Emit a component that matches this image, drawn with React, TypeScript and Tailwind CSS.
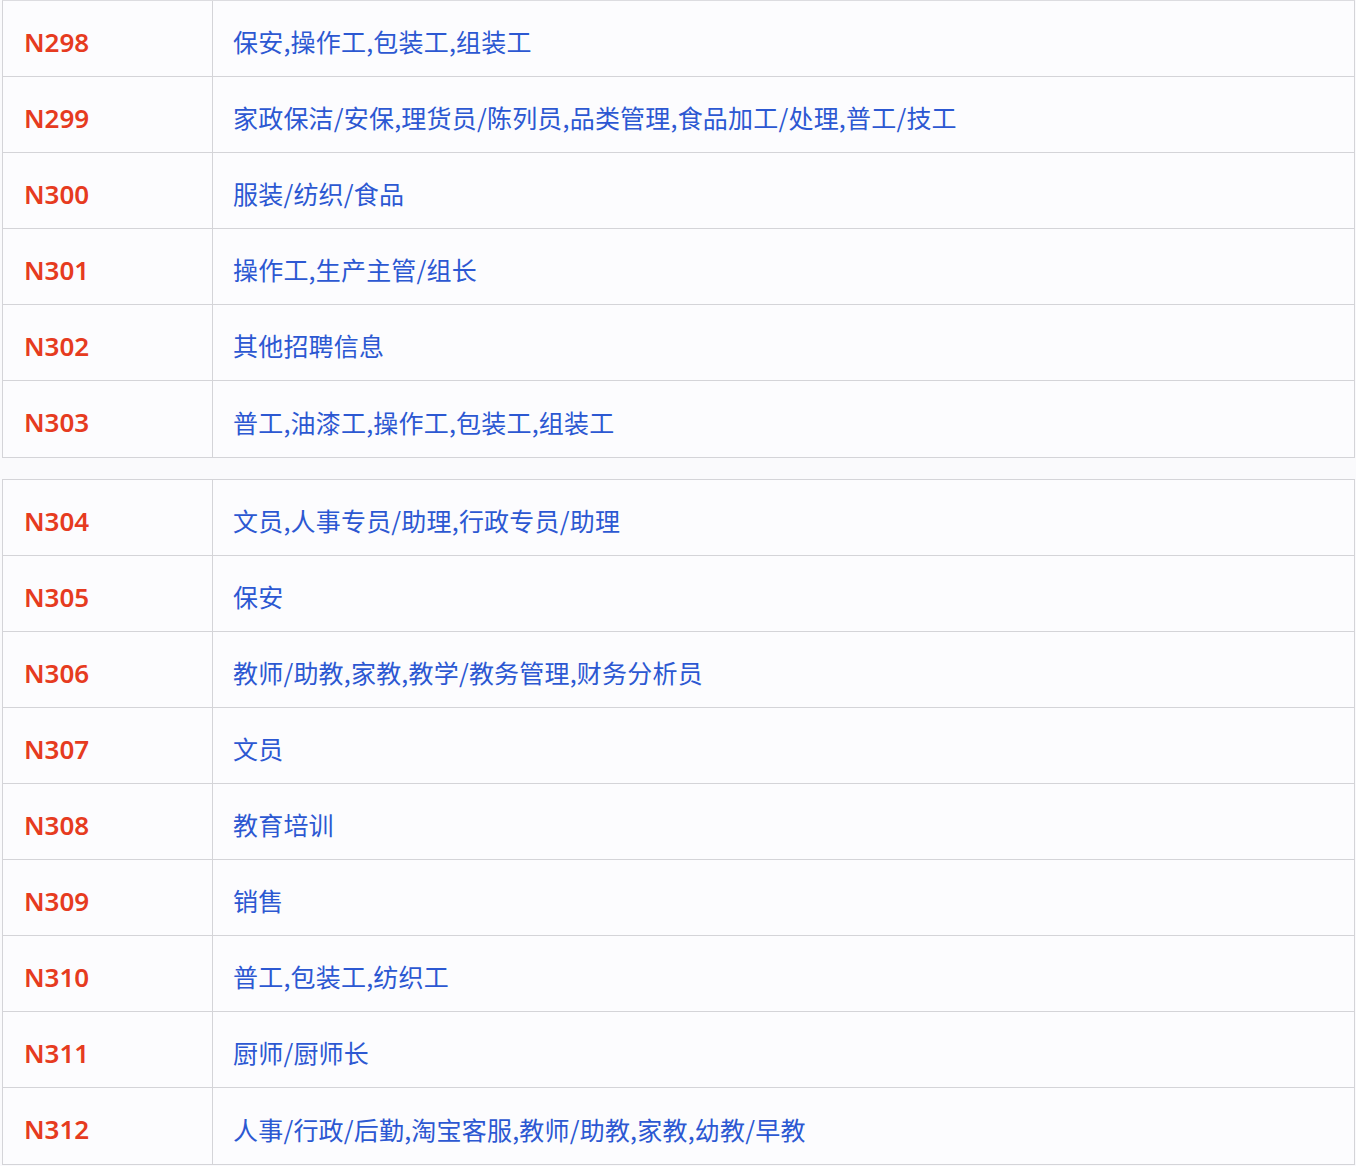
const groups: [string, string][][] = [
  [
    ['N298', '保安,操作工,包装工,组装工'],
    ['N299', '家政保洁/安保,理货员/陈列员,品类管理,食品加工/处理,普工/技工'],
    ['N300', '服装/纺织/食品'],
    ['N301', '操作工,生产主管/组长'],
    ['N302', '其他招聘信息'],
    ['N303', '普工,油漆工,操作工,包装工,组装工'],
  ],
  [
    ['N304', '文员,人事专员/助理,行政专员/助理'],
    ['N305', '保安'],
    ['N306', '教师/助教,家教,教学/教务管理,财务分析员'],
    ['N307', '文员'],
    ['N308', '教育培训'],
    ['N309', '销售'],
    ['N310', '普工,包装工,纺织工'],
    ['N311', '厨师/厨师长'],
    ['N312', '人事/行政/后勤,淘宝客服,教师/助教,家教,幼教/早教'],
  ],
];

function Row({ code, jobs, last }: { code: string; jobs: string; last: boolean }) {
  return (
    <div className={`grid h-[76px] grid-cols-[210px_1fr] ${last ? '' : 'border-b border-[#d4d4d8]'}`}>
      <div className="flex items-center border-r border-[#d4d4d8] pl-[21px] pt-[7px] font-['Noto_Sans',sans-serif] text-[26px] font-semibold text-[#e63b20]">
        {code}
      </div>
      <div className="flex items-center pl-[20px] pt-[7px] font-['Noto_Sans_CJK_SC',sans-serif] text-[25px] tracking-[0.2px] text-[#2c58d2]">
        {jobs}
      </div>
    </div>
  );
}

export default function App() {
  return (
    <div className="min-h-screen bg-[#fafafc] pl-[2px]">
      <div className="flex w-[1353px] flex-col gap-[21px]">
        {groups.map((rows, gi) => (
          <div key={gi} className={`border border-[#d4d4d8] bg-[#fcfcfe] ${gi === 0 ? 'border-t-[#dcdce0]' : ''}`}>
            {rows.map(([code, jobs], i) => (
              <Row key={code} code={code} jobs={jobs} last={i === rows.length - 1} />
            ))}
          </div>
        ))}
      </div>
    </div>
  );
}
